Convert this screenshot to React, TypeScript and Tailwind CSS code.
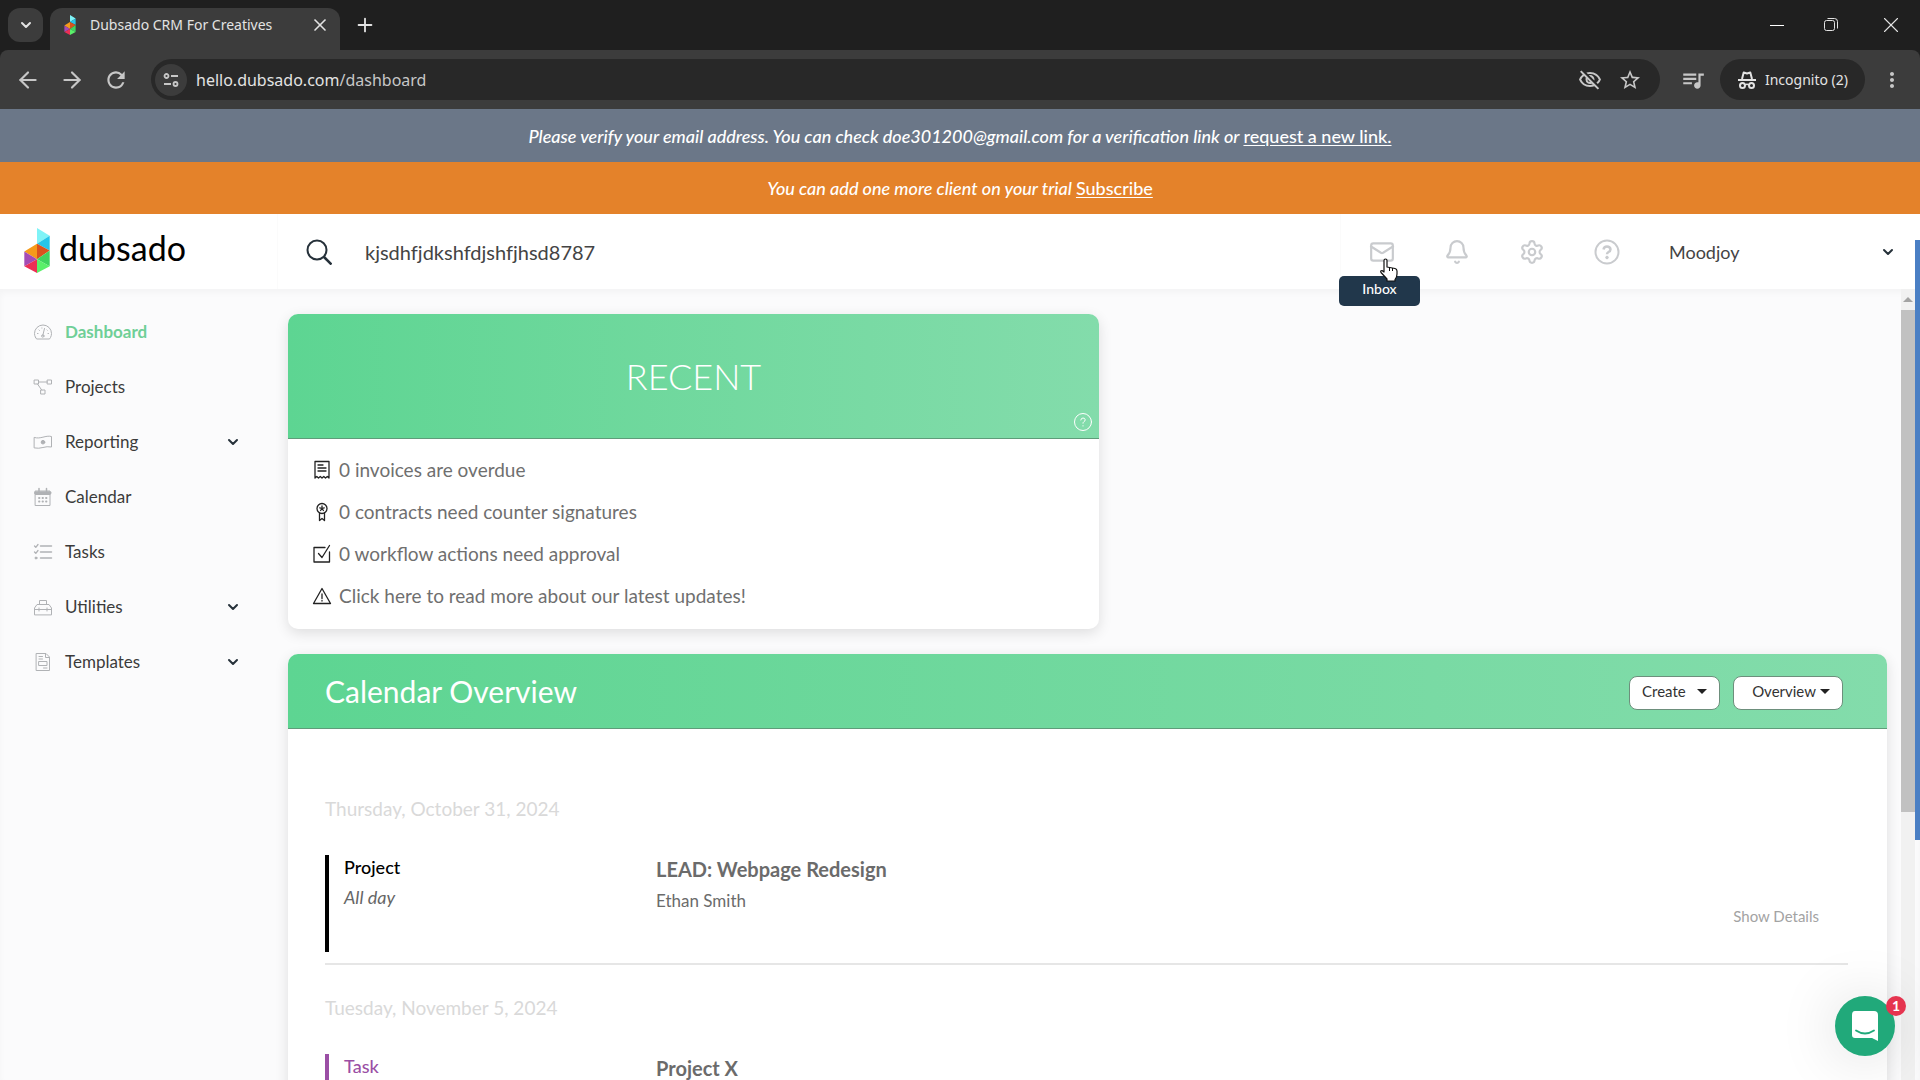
import type { ReactNode } from "react";
import { ArrowLeft, ArrowRight, Bell, ChevronDown, Mail, Plus, Settings, X } from "lucide-react";
import { MdMoreVert, MdOutlineVisibilityOff, MdQueueMusic, MdRefresh, MdStarOutline } from "react-icons/md";
import { clsx } from "clsx";

type NavItem = { label: string; icon: ReactNode; active?: boolean; expandable?: boolean };
type Entry = { date: string; kind: string; bar: string; tone: string; title: string; time?: string; client?: string };

// 20px line icons, shared by the sidebar and the recent list
function LineIcon({ children, className, width = 1 }: { children: ReactNode; className?: string; width?: number }) {
  return (
    <svg
      viewBox="0 0 20 20"
      fill="none"
      stroke="currentColor"
      strokeWidth={width}
      strokeLinejoin="round"
      strokeLinecap="round"
      className={clsx("size-5 shrink-0", className)}
      aria-hidden="true"
    >
      {children}
    </svg>
  );
}

const NAV: NavItem[] = [
  {
    label: "Dashboard",
    active: true,
    icon: (
      <>
        <path d="M2.5 15.5Q1.5 13.5 1.5 11.5a8.5 8.5 0 0 1 17 0q0 2-1 4-.5 1.500-1.500 1.500H4q-1 0-1.500-1.500Z" />
        <path d="M9.8 13.500 11.5 6.5M4.5 11.500h.5M6 8l.4.4M15 11.500h.5M14 8l.2.2M8.800 6h.2" />
        <circle cx="9.800" cy="14" r="1.200" />
      </>
    )
  },
  {
    label: "Projects",
    icon: <path d="M1.5 3h4v4h-4ZM14.5 3h4v4h-4ZM8 13h4v4H8ZM5.500 5h9M4.500 7l4.200 6" />
  },
  {
    label: "Reporting",
    expandable: true,
    icon: (
      <>
        <path d="M1.5 5.5c6 2 11-2.5 17-1v10.500c-6-1.500-11 2.500-17 1Z" />
        <circle cx="10" cy="10.2" r="1.8" fill="currentColor" />
      </>
    )
  },
  {
    label: "Calendar",
    icon: (
      <>
        <path d="M2.5 4H17v14.500H2.500ZM2.500 7.500H17" />
        <path d="M2.5 5.800H17" strokeWidth="3" />
        <path d="M6 1.500v3M13.500 1.500v3" strokeWidth="1.5" />
        <path d="M6 11h.5M9.500 11h.5M13 11h.5M6 14.500h.5M9.500 14.500h.5M13 14.500h.5" strokeWidth="1.8" />
      </>
    )
  },
  {
    label: "Tasks",
    icon: (
      <>
        <path d="M7.500 4h11M7.500 10h11M7.500 16h11" strokeWidth="1.5" />
        <path d="m1.500 4 1.300 1.300L5 2.500M1.500 10l1.300 1.300L5 8.500" strokeWidth="1.3" />
        <circle cx="3" cy="16" r="1" fill="currentColor" />
      </>
    )
  },
  {
    label: "Utilities",
    expandable: true,
    icon: (
      <>
        <path d="M1.500 17.500V11L4 7.500h12l2.500 3.500v6.500Z" />
        <path d="M6.500 7.500v-4h7v4M1.500 12.500h17M6 11v3M14 11v3" />
      </>
    )
  },
  {
    label: "Templates",
    expandable: true,
    icon: (
      <>
        <path d="M3.500 1.500H13L16.500 5v13.500h-13ZM12.500 1.500v4h4" />
        <path d="M6 4.500h3.500M6 7h3.500M6 9.500h8v4H6ZM10.500 16H14" />
      </>
    )
  }
];

const RECENT: { text: string; icon: ReactNode }[] = [
  {
    text: "0 invoices are overdue",
    icon: (
      <>
        <path d="M3 18V1.500h14V18l-1.700-1.500-1.800 1.500-1.700-1.500L10 18l-1.700-1.500L6.500 18l-1.700-1.500Z" />
        <path d="M6 5h5M6 8h8M6 11h8" />
      </>
    )
  },
  {
    text: "0 contracts need counter signatures",
    icon: (
      <>
        <circle cx="10" cy="6.500" r="5" />
        <path d="M7.500 11v7.500l2.500-2 2.500 2V11" />
        <path d="M10 4v2.500M7.800 5.800l2.200.7 2.200-.7M8.600 8.500l1.400-2 1.400 2" />
      </>
    )
  },
  {
    text: "0 workflow actions need approval",
    icon: <path d="M13 3.500H2V18h15.500V8M6.500 9.500l3.500 4L17.500 1.500" />
  },
  {
    text: "Click here to read more about our latest updates!",
    icon: (
      <>
        <path d="M10 2.500 18.500 17.500H1.500Z" />
        <path d="M10 8v4.500M10 14.500v.6" />
      </>
    )
  }
];

const ENTRIES: Entry[] = [
  {
    date: "Thursday, October 31, 2024",
    kind: "Project",
    bar: "border-black",
    tone: "text-black",
    title: "LEAD: Webpage Redesign",
    time: "All day",
    client: "Ethan Smith"
  },
  {
    date: "Tuesday, November 5, 2024",
    kind: "Task",
    bar: "border-[#9b4fa5]",
    tone: "text-[#9b4fa5]",
    title: "Project X"
  }
];

function CubeMark({ className }: { className?: string }) {
  return (
    <svg viewBox="0 0 26 46" className={className} aria-hidden="true">
      <path d="M13 0 26 8 13 16Z" fill="#7ff3f7" />
      <path d="M26 8v15L13 16Z" fill="#25c5ea" />
      <path d="M0 24 13 16v16Z" fill="#f59a1b" />
      <path d="M13 16 26 23 13 32Z" fill="#d9531e" />
      <path d="M0 24 13 32 0 39Z" fill="#a44bb5" />
      <path d="M13 32v14L0 39Z" fill="#ec2f55" />
      <path d="M26 23v16L13 32Z" fill="#3fd45f" />
      <path d="M13 32 26 39 13 46Z" fill="#5af06a" />
    </svg>
  );
}

function IncognitoIcon() {
  return (
    <svg viewBox="0 0 20 20" className="size-5" fill="none" stroke="currentColor" aria-hidden="true">
      <path d="M1 10h18" strokeWidth="2" />
      <path d="M5 9 6.700 2.500l3.300 1 3.300-1L15 9" strokeWidth="2" strokeLinejoin="round" />
      <circle cx="5.500" cy="15.500" r="2.500" strokeWidth="2" />
      <circle cx="14.500" cy="15.500" r="2.500" strokeWidth="2" />
      <path d="M8 15q2-1.500 4 0" strokeWidth="1.5" />
    </svg>
  );
}

function BrowserChrome() {
  return (
    <div className="shrink-0 bg-[#1f1f1f] font-['Noto_Sans',sans-serif] text-[#e3e3e3]">
      <div className="flex h-[50px] items-start pt-2">
        <button
          type="button"
          aria-label="Search tabs"
          className="ml-2 flex h-[34px] w-[35px] items-center justify-center rounded-xl bg-[#3c3c3c]"
        >
          <ChevronDown className="size-4" strokeWidth={3} />
        </button>
        <div className="ml-[7px] flex h-[42px] w-[290px] items-center rounded-t-xl bg-[#3c3c3c] pr-[10px] pb-2 pl-3">
          <CubeMark className="h-5 w-4" />
          <span className="ml-3 flex-1 text-sm leading-5 whitespace-nowrap">Dubsado CRM For Creatives</span>
          <button type="button" aria-label="Close tab">
            <X className="size-5" strokeWidth={2} />
          </button>
        </div>
        <button type="button" aria-label="New tab" className="ml-[14px] flex h-[34px] items-center">
          <Plus className="size-[22px]" strokeWidth={2} />
        </button>
        <div className="ml-auto flex h-[34px] items-center gap-[39px] pr-4">
          <button type="button" aria-label="Minimize" className="h-px w-[14px] bg-white" />
          <button type="button" aria-label="Restore">
            <svg viewBox="0 0 16 16" className="size-4" fill="none" stroke="currentColor" aria-hidden="true">
              <rect x="1.500" y="3.500" width="10" height="10" rx="2" />
              <path d="M4.500 1.500h7a3 3 0 0 1 3 3v7" />
            </svg>
          </button>
          <button type="button" aria-label="Close window">
            <X className="size-[26px]" strokeWidth={1} />
          </button>
        </div>
      </div>

      <div className="flex h-[59px] items-center rounded-t-lg bg-[#3c3c3c] text-[#c7c7c7]">
        <div className="flex items-center gap-[18px] pl-[15px]">
          <button type="button" aria-label="Back">
            <ArrowLeft className="size-[26px]" strokeWidth={2} />
          </button>
          <button type="button" aria-label="Forward">
            <ArrowRight className="size-[26px]" strokeWidth={2} />
          </button>
          <button type="button" aria-label="Reload">
            <MdRefresh className="size-[26px]" />
          </button>
        </div>
        <div className="ml-[22px] flex h-[41px] flex-1 items-center rounded-full bg-[#282828] pr-[18px] pl-1">
          <button
            type="button"
            aria-label="Site information"
            className="flex size-8 items-center justify-center rounded-full bg-[#3c3c3c]"
          >
            <svg viewBox="0 0 16 16" className="size-4" fill="none" stroke="currentColor" strokeWidth="1.8" aria-hidden="true">
              <circle cx="3.500" cy="4" r="2" />
              <path d="M8 4h7M1 12h7" />
              <circle cx="12.500" cy="12" r="2" />
            </svg>
          </button>
          <span className="ml-[9px] flex-1 text-base leading-6 text-[#e3e3e3]">
            hello.dubsado.com<span className="text-[#c7c7c7]">/dashboard</span>
          </span>
          <button type="button" aria-label="Third-party cookies blocked">
            <MdOutlineVisibilityOff className="size-6" />
          </button>
          <button type="button" aria-label="Bookmark this tab" className="ml-4">
            <MdStarOutline className="size-6" />
          </button>
        </div>
        <button type="button" aria-label="Media controls" className="ml-5">
          <MdQueueMusic className="size-[26px]" />
        </button>
        <button
          type="button"
          className="ml-[14px] flex h-[41px] w-[145px] items-center justify-center gap-2 rounded-full bg-[#282828] text-sm text-[#e3e3e3]"
        >
          <IncognitoIcon />
          Incognito (2)
        </button>
        <button type="button" aria-label="Menu" className="mr-4 ml-[15px]">
          <MdMoreVert className="size-6" />
        </button>
      </div>
    </div>
  );
}

function Notice({ className, text, link }: { className: string; text: string; link: string }) {
  return (
    <div className={clsx("flex shrink-0 items-center justify-center gap-1 text-lg leading-6 font-medium text-white", className)}>
      <em>{text}</em>
      <a href="#" className="underline underline-offset-2">
        {link}
      </a>
    </div>
  );
}

function PointerCursor() {
  return (
    <svg viewBox="0 0 20 24" className="h-6 w-5" aria-hidden="true">
      <path
        d="M5 2.500a1.500 1.500 0 0 1 3 0V9l8 1.500q2 .5 2 2.500v3q0 3-2 5.500V23H8v-2L2 14.500q-1-2 1-2l2 1.500Z"
        fill="#fff"
        stroke="#111"
        strokeWidth="1.2"
        strokeLinejoin="round"
      />
      <path d="M10.500 9.500V13M13.500 10v3" stroke="#111" />
    </svg>
  );
}

function AppHeader() {
  return (
    <header className="flex h-[75px] shrink-0 items-center bg-white">
      <a href="#" className="flex w-[277px] items-center pb-[3px] pl-6">
        <CubeMark className="h-[45px] w-[26px]" />
        <span className="ml-[9px] pb-1 text-[34px] leading-8 text-black">dubsado</span>
      </a>
      <div className="flex flex-1 items-center self-stretch border-x border-[#fbfbfb] pl-7">
        <svg viewBox="0 0 26 26" className="size-[26px]" fill="none" stroke="#26313a" strokeWidth="2" aria-hidden="true">
          <circle cx="11" cy="11" r="9.500" />
          <path d="m18 18 7.500 7.500" strokeWidth="2.5" />
        </svg>
        <input
          aria-label="Search"
          defaultValue="kjsdhfjdkshfdjshfjhsd8787"
          className="ml-[33px] flex-1 bg-transparent text-xl text-[#444] [font-variant-ligatures:none] outline-none"
        />
      </div>
      <div className="flex items-center gap-[49px] pl-7 text-[#c9cbce]">
        <div className="relative">
          <button type="button" aria-label="Inbox" className="block">
            <Mail className="size-[26px]" strokeWidth={2} strokeLinecap="square" strokeLinejoin="miter" />
          </button>
          <div
            role="tooltip"
            className="absolute top-[37px] -left-[30px] z-10 w-[81px] rounded-[5px] bg-[#21374b] pt-1 pb-2 text-center text-sm leading-[18px] font-medium text-white"
          >
            Inbox
          </div>
          <div className="absolute top-[19px] left-[10px] z-20">
            <PointerCursor />
          </div>
        </div>
        <button type="button" aria-label="Notifications">
          <Bell className="size-[26px]" strokeWidth={2} />
        </button>
        <button type="button" aria-label="Settings">
          <Settings className="size-[26px]" strokeWidth={2} />
        </button>
        <button type="button" aria-label="Help">
          <svg viewBox="0 0 26 26" className="size-[26px]" fill="none" stroke="currentColor" strokeWidth="2" aria-hidden="true">
            <circle cx="13" cy="13" r="11.500" />
            <path d="M9.500 10.500q.5-3 3.500-3t3.500 2.700q0 1.800-2 2.800-1.500.8-1.500 2.300" strokeWidth="2.5" />
            <circle cx="13" cy="18.500" r="1.300" fill="currentColor" strokeWidth="1" />
          </svg>
        </button>
      </div>
      <button type="button" className="ml-[49px] flex w-[251px] items-center justify-between pr-6 text-lg text-[#444]">
        Moodjoy
        <ChevronDown className="size-4 text-[#26313a]" strokeWidth={3} />
      </button>
    </header>
  );
}

function Sidebar() {
  return (
    <nav className="w-72 shrink-0 pt-[15px]">
      <ul>
        {NAV.map((item) => (
          <li key={item.label}>
            <a
              href="#"
              className={clsx(
                "flex h-[55px] items-center pr-[47px] pl-[33px] text-[17px]",
                item.active ? "font-bold text-[#6fcf97]" : "text-[#3b3b3b]"
              )}
            >
              <LineIcon className="text-[#b0b2b5]">{item.icon}</LineIcon>
              <span className="ml-3 flex-1">{item.label}</span>
              {item.expandable && <ChevronDown className="size-4 text-[#26313a]" strokeWidth={3} />}
            </a>
          </li>
        ))}
      </ul>
    </nav>
  );
}

function RecentCard() {
  return (
    <section className="w-[811px] rounded-[10px] bg-white shadow-[0_4px_14px_rgba(0,0,0,0.12)]">
      <header className="relative flex h-[125px] items-center justify-center rounded-t-[10px] border-b border-[#5f9c7a] bg-linear-to-r from-[#5dd592] to-[#83dcab]">
        <h2 className="text-[36px] leading-10 font-light text-white">RECENT</h2>
        <button type="button" aria-label="About this card" className="absolute right-[6px] bottom-[6px] text-white">
          <LineIcon>
            <circle cx="10" cy="10" r="8.500" />
            <path d="M7.800 8q.2-2 2.200-2t2.200 1.800q0 1.200-1.300 1.900-.9.500-.9 1.500M10 13.700v.3" />
          </LineIcon>
        </button>
      </header>
      <ul className="pt-[10px] pb-3">
        {RECENT.map((item) => (
          <li key={item.text}>
            <a href="#" className="flex h-[42px] items-center pl-6 text-[19px] text-[#6f6f6f]">
              <LineIcon className="text-[#222]" width={1.3}>
                {item.icon}
              </LineIcon>
              <span className="ml-[7px]">{item.text}</span>
            </a>
          </li>
        ))}
      </ul>
    </section>
  );
}

function Caret() {
  return <span className="border-x-[5px] border-t-[5px] border-x-transparent border-t-[#222]" />;
}

function CalendarCard() {
  return (
    <section className="rounded-t-[10px] bg-white shadow-[0_4px_14px_rgba(0,0,0,0.12)]">
      <header className="flex h-[75px] items-center rounded-t-[10px] border-b border-[#5f9c7a] bg-linear-to-r from-[#5dd592] to-[#83dcab] pr-11 pl-[37px]">
        <h2 className="flex-1 text-[30px] leading-9 text-white">Calendar Overview</h2>
        <div className="flex gap-[13px] pt-[3px]">
          <button
            type="button"
            className="flex h-[34px] w-[91px] items-center justify-between rounded-lg border border-[#6d8f7c] bg-white px-3 pb-0.5 text-[15px] text-[#333]"
          >
            Create
            <Caret />
          </button>
          <button
            type="button"
            className="flex h-[34px] w-[110px] items-center justify-end gap-1 rounded-lg border border-[#6d8f7c] bg-white pr-3 pb-0.5 text-[15px] text-[#333]"
          >
            Overview
            <Caret />
          </button>
        </div>
      </header>
      <div className="pt-[37px] pr-[39px] pl-[37px]">
        {ENTRIES.map((entry) => (
          <div key={entry.date} className="border-b-2 border-[#e6e6e6] pt-[29px] pb-[11px]">
            <h3 className="text-[19px] leading-7 text-[#d9d9d9]">{entry.date}</h3>
            <div className={clsx("mt-8 flex h-[97px] border-l-4 pl-[15px]", entry.bar)}>
              <div className="w-[312px]">
                <p className={clsx("text-lg leading-6 font-medium", entry.tone)}>{entry.kind}</p>
                {entry.time && <p className="mt-1 text-lg leading-7 text-[#666] italic">{entry.time}</p>}
              </div>
              <div className="flex-1">
                <p className="text-xl leading-7 font-bold text-[#6b6b6b]">{entry.title}</p>
                {entry.client && <p className="mt-1 text-[17px] leading-7 text-[#6b6b6b]">{entry.client}</p>}
              </div>
              {entry.client && (
                <button type="button" className="mt-6 mr-[29px] self-center text-[15px] leading-5 text-[#a3a3a3]">
                  Show Details
                </button>
              )}
            </div>
          </div>
        ))}
      </div>
    </section>
  );
}

function ChatLauncher() {
  return (
    <button
      type="button"
      aria-label="Open messenger, 1 unread"
      className="absolute right-[25px] bottom-6 z-30 flex size-[60px] items-center justify-center rounded-full bg-[#21a97a] shadow-[0_2px_60px_rgba(0,0,0,0.15)]"
    >
      <svg viewBox="0 0 28 32" className="h-8 w-7" aria-hidden="true">
        <path d="M4 1h19q4 0 4 4v26l-6-3H4q-3 0-3-3V5q0-4 3-4Z" fill="#fff" />
        <path d="M5 20.500q9 6 18 0" fill="none" stroke="#21a97a" strokeWidth="1.8" strokeLinecap="round" />
      </svg>
      <span className="absolute top-0 -right-[11px] flex size-5 items-center justify-center rounded-full bg-[#e5344f] text-sm font-bold text-white">
        1
      </span>
    </button>
  );
}

export default function App() {
  return (
    <div className="relative flex h-screen flex-col overflow-hidden bg-[#fbfbfc] font-['Lato',sans-serif]">
      <BrowserChrome />
      <Notice
        className="h-[53px] bg-[#6b7788]"
        text="Please verify your email address. You can check doe301200@gmail.com for a verification link or"
        link="request a new link."
      />
      <Notice className="h-[52px] bg-[#e4822a]" text="You can add one more client on your trial" link="Subscribe" />
      <AppHeader />
      <div className="flex min-h-0 flex-1 pr-[5px] shadow-[inset_0_4px_6px_rgba(0,0,0,0.03)]">
        <Sidebar />
        <main className="min-w-0 flex-1">
          <div className="flex flex-col gap-[25px] pt-[25px] pr-[14px]">
            <RecentCard />
            <CalendarCard />
          </div>
        </main>
        <div className="flex w-[14px] shrink-0 flex-col items-center bg-[#f1f1f1] pt-2" aria-hidden="true">
          <span className="border-x-[5px] border-b-[5px] border-x-transparent border-b-[#a3a3a3]" />
          <span className="mt-2 h-[502px] w-full bg-[#c1c1c1]" />
        </div>
      </div>
      <div className="absolute top-[240px] right-0 h-[600px] w-[5px] bg-[#4a7fc4]" />
      <ChatLauncher />
    </div>
  );
}
